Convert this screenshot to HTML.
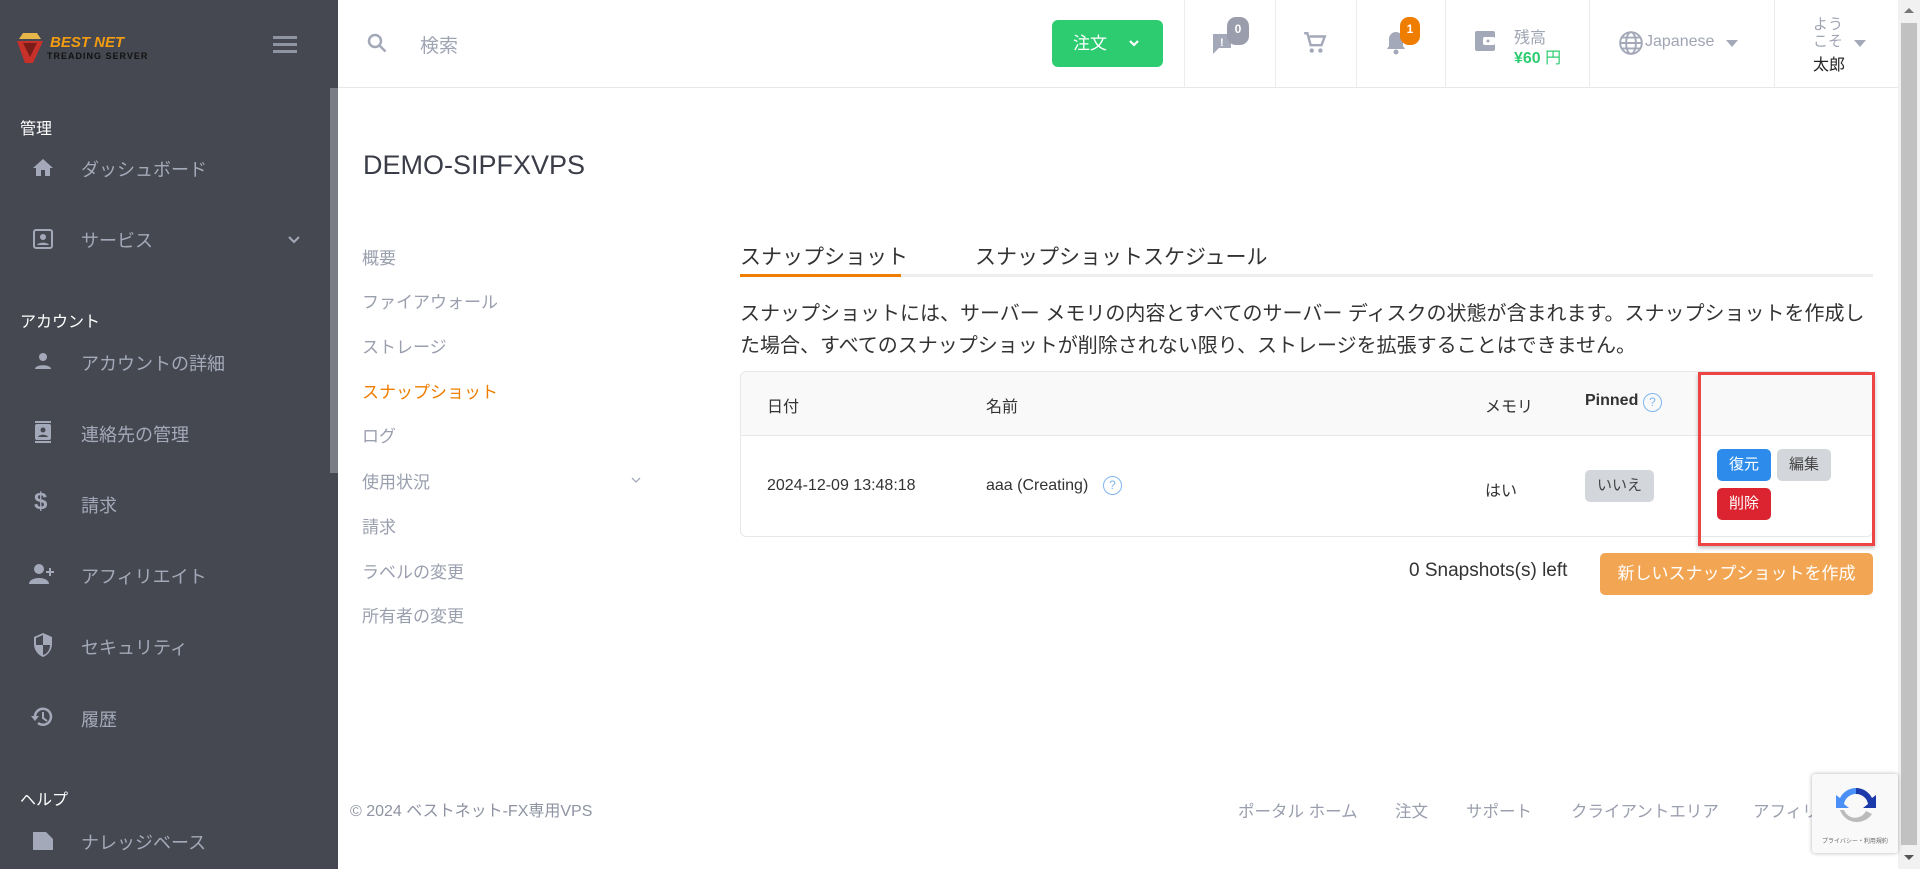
<!DOCTYPE html>
<html><head><meta charset="utf-8"><style>
*{box-sizing:border-box;margin:0;padding:0}
body{width:1920px;height:869px;overflow:hidden;background:#fff;font-family:"Liberation Sans","Noto Sans CJK JP",sans-serif;position:relative}
.a{position:absolute;white-space:nowrap}
#sb{position:absolute;left:0;top:0;width:338px;height:869px;background:#464851}
.sl{color:#fff;font-size:16px}
.si{color:#a4a9b9;font-size:18px}
.ic{position:absolute}
.hd{position:absolute;top:0;height:88px;border-left:1px solid #ececec}
.m{color:#9a9fae;font-size:17px}
.th{font-size:16px;color:#333}
.btn{position:absolute;border-radius:5px;font-size:14px;text-align:center;color:#fff}
</style></head><body>
<div id="sb">
 <svg class="ic" style="left:15px;top:33px" width="40" height="30" viewBox="0 0 40 30"><polygon points="8,0 22,0 26,6 4,6" fill="#e6b64a"/><polygon points="2,8 28,8 18,30 10,30" fill="#c8302a"/><polygon points="8,10 22,10 15,24" fill="#7a1c18"/></svg>
 <div class="a" style="left:50px;top:34px;color:#f39c12;font:italic bold 15px 'Liberation Sans',sans-serif">BEST NET</div>
 <div class="a" style="left:47px;top:51px;color:#111;font:bold 9px 'Liberation Sans',sans-serif;letter-spacing:1px">TREADING SERVER</div>
 <div class="a" style="left:273px;top:36px;width:24px;height:3px;background:#8f94a3;box-shadow:0 7px 0 #8f94a3,0 14px 0 #8f94a3"></div>
 <div class="a" style="left:330px;top:88px;width:8px;height:385px;background:#7b7d86"></div>
 <div class="a sl" style="left:20px;top:115px">管理</div>
 <svg class="ic" style="left:31px;top:156px" width="24" height="24" viewBox="0 0 24 24"><path d="M10 20v-6h4v6h5v-8h3L12 3 2 12h3v8z" fill="#a4a9b9"/></svg>
 <div class="a si" style="left:81px;top:156px">ダッシュボード</div>
 <svg class="ic" style="left:31px;top:227px" width="24" height="24" viewBox="0 0 24 24"><rect x="3" y="3" width="18" height="18" rx="2" fill="none" stroke="#a4a9b9" stroke-width="2"/><circle cx="12" cy="10" r="3" fill="#a4a9b9"/><path d="M6 18c1-3 11-3 12 0z" fill="#a4a9b9"/></svg>
 <div class="a si" style="left:81px;top:227px">サービス</div>
 <svg class="ic" style="left:286px;top:232px" width="16" height="16" viewBox="0 0 16 16"><path d="M3 5l5 5 5-5" stroke="#a4a9b9" stroke-width="2" fill="none"/></svg>
 <div class="a sl" style="left:20px;top:308px">アカウント</div>
 <svg class="ic" style="left:31px;top:349px" width="24" height="24" viewBox="0 0 24 24"><circle cx="12" cy="8" r="4" fill="#a4a9b9"/><path d="M4 20c0-5 16-5 16 0z" fill="#a4a9b9"/></svg>
 <div class="a si" style="left:81px;top:350px">アカウントの詳細</div>
 <svg class="ic" style="left:31px;top:420px" width="24" height="24" viewBox="0 0 24 24"><rect x="4" y="4" width="16" height="16" rx="2" fill="#a4a9b9"/><rect x="4" y="1" width="16" height="2" fill="#a4a9b9"/><rect x="4" y="21" width="16" height="2" fill="#a4a9b9"/><circle cx="12" cy="10" r="2.5" fill="#464851"/><path d="M7 17c1-3 9-3 10 0z" fill="#464851"/></svg>
 <div class="a si" style="left:81px;top:421px">連絡先の管理</div>
 <div class="a" style="left:34px;top:488px;color:#a4a9b9;font-size:24px;font-weight:bold">$</div>
 <div class="a si" style="left:81px;top:492px">請求</div>
 <svg class="ic" style="left:28px;top:562px" width="30" height="24" viewBox="0 0 30 24"><circle cx="11" cy="7" r="5" fill="#a4a9b9"/><path d="M1 22c0-8 20-8 20 0z" fill="#a4a9b9"/><path d="M22 6v8M18 10h8" stroke="#a4a9b9" stroke-width="2"/></svg>
 <div class="a si" style="left:81px;top:563px">アフィリエイト</div>
 <svg class="ic" style="left:31px;top:632px" width="24" height="26" viewBox="0 0 24 26"><path d="M12 1L3 5v7c0 6 4 11 9 13 5-2 9-7 9-13V5z" fill="#a4a9b9"/><path d="M12 3v10H5V6zM12 13h7c0 5-3 9-7 10z" fill="#464851"/></svg>
 <div class="a si" style="left:81px;top:634px">セキュリティ</div>
 <svg class="ic" style="left:29px;top:704px" width="26" height="26" viewBox="0 0 26 26"><path d="M6 13a8 8 0 1 1 3 6" stroke="#a4a9b9" stroke-width="2.5" fill="none"/><path d="M2 12h8l-4 5z" fill="#a4a9b9"/><path d="M14 8v6l4 3" stroke="#a4a9b9" stroke-width="2" fill="none"/></svg>
 <div class="a si" style="left:81px;top:706px">履歴</div>
 <div class="a sl" style="left:20px;top:786px">ヘルプ</div>
 <svg class="ic" style="left:31px;top:829px" width="24" height="24" viewBox="0 0 24 24"><path d="M2 3h13l7 7v11H2z" fill="#a4a9b9"/></svg>
 <div class="a si" style="left:81px;top:829px">ナレッジベース</div>
</div>
<!-- header -->
<div class="a" style="left:338px;top:87px;width:1560px;height:1px;background:#e8e8e8"></div>
<svg class="ic" style="left:365px;top:31px" width="24" height="24" viewBox="0 0 24 24"><circle cx="10" cy="10" r="6" stroke="#a4a9b9" stroke-width="2.5" fill="none"/><path d="M14.5 14.5l6 6" stroke="#a4a9b9" stroke-width="2.5"/></svg>
<div class="a" style="left:420px;top:31px;font-size:19px;color:#a0a5b4">検索</div>
<div class="btn" style="left:1052px;top:20px;width:111px;height:47px;background:#2ecc71;font-size:17px;line-height:47px;border-radius:6px;text-align:left;padding-left:21px">注文<svg style="position:absolute;left:76px;top:19px" width="12" height="10" viewBox="0 0 12 10"><path d="M2 2l4 4 4-4" stroke="#fff" stroke-width="2.2" fill="none"/></svg></div>
<div class="hd" style="left:1184px"></div><div class="hd" style="left:1275px"></div><div class="hd" style="left:1356px"></div><div class="hd" style="left:1445px"></div><div class="hd" style="left:1589px"></div><div class="hd" style="left:1774px"></div>
<svg class="ic" style="left:1211px;top:30px" width="24" height="26" viewBox="0 0 24 26"><path d="M2 4h18v14H8l-6 6z" fill="#a4a9b9"/><text x="9" y="16" font-size="11" fill="#fff" font-family="Liberation Sans" font-weight="bold">!</text></svg>
<div class="a" style="left:1227px;top:17px;width:22px;height:28px;border-radius:9px;background:#9a9dab;color:#fff;font-size:12px;font-weight:bold;text-align:center;line-height:24px">0</div>
<svg class="ic" style="left:1302px;top:30px" width="26" height="26" viewBox="0 0 24 24"><path d="M2 3h3l3 11h10l3-8H7" stroke="#a4a9b9" stroke-width="2.2" fill="none"/><circle cx="9" cy="19" r="2" fill="#a4a9b9"/><circle cx="17" cy="19" r="2" fill="#a4a9b9"/></svg>
<svg class="ic" style="left:1384px;top:30px" width="24" height="26" viewBox="0 0 24 26"><path d="M12 2a7 7 0 0 0-7 7v7l-2 3h18l-2-3V9a7 7 0 0 0-7-7z" fill="#a4a9b9"/><circle cx="12" cy="22" r="2.5" fill="#a4a9b9"/></svg>
<div class="a" style="left:1400px;top:17px;width:20px;height:28px;border-radius:9px;background:#ef7d00;color:#fff;font-size:12px;font-weight:bold;text-align:center;line-height:24px">1</div>
<svg class="ic" style="left:1474px;top:29px" width="22" height="24" viewBox="0 0 22 24"><rect x="1" y="2" width="20" height="20" rx="2" fill="#a4a9b9"/><rect x="9" y="8" width="12" height="8" rx="2" fill="#fff"/><circle cx="14" cy="12" r="1.5" fill="#a4a9b9"/></svg>
<div class="a" style="left:1514px;top:24px;font-size:16px;color:#a0a5b4">残高</div>
<div class="a" style="left:1514px;top:44px;font-size:16px;color:#2ecc71;font-weight:bold">¥60 <span style="font-weight:normal">円</span></div>
<svg class="ic" style="left:1618px;top:30px" width="26" height="26" viewBox="0 0 24 24" fill="none" stroke="#a4a9b9" stroke-width="1.8"><circle cx="12" cy="12" r="10"/><ellipse cx="12" cy="12" rx="4.5" ry="10"/><path d="M2 12h20M4 7h16M4 17h16"/></svg>
<div class="a" style="left:1645px;top:33px;font-size:16px;color:#a0a5b4">Japanese</div>
<div class="a" style="left:1726px;top:40px;border:6px solid transparent;border-top:7px solid #a4a9b9"></div>
<div class="a" style="left:1813px;top:16px;font-size:15px;color:#a0a5b4;line-height:17px">よう<br>こそ</div>
<div class="a" style="left:1854px;top:40px;border:6px solid transparent;border-top:7px solid #a4a9b9"></div>
<div class="a" style="left:1813px;top:51px;font-size:16px;color:#222">太郎</div>
<!-- scrollbar -->
<div class="a" style="left:1898px;top:0;width:22px;height:869px;background:#f1f1f1"></div>
<div class="a" style="left:1901px;top:23px;width:16px;height:822px;background:#c1c1c1"></div>
<div class="a" style="left:1904px;top:8px;border:5px solid transparent;border-bottom:5px solid #777;border-top:0"></div>
<div class="a" style="left:1904px;top:855px;border:5px solid transparent;border-top:5px solid #555;border-bottom:0"></div>
<!-- content -->
<div class="a" style="left:363px;top:150px;font-size:27px;color:#3a3d48">DEMO-SIPFXVPS</div>
<div class="a m" style="left:362px;top:244px">概要</div>
<div class="a m" style="left:362px;top:288px">ファイアウォール</div>
<div class="a m" style="left:362px;top:333px">ストレージ</div>
<div class="a m" style="left:362px;top:378px;color:#ef7d00">スナップショット</div>
<div class="a m" style="left:362px;top:422px">ログ</div>
<div class="a m" style="left:362px;top:468px">使用状況</div>
<svg class="ic" style="left:630px;top:475px" width="12" height="10" viewBox="0 0 12 10"><path d="M2 3l4 4 4-4" stroke="#a4a9b9" stroke-width="1.3" fill="none"/></svg>
<div class="a m" style="left:362px;top:513px">請求</div>
<div class="a m" style="left:362px;top:558px">ラベルの変更</div>
<div class="a m" style="left:362px;top:602px">所有者の変更</div>
<div class="a" style="left:740px;top:241px;font-size:21px;color:#333">スナップショット</div>
<div class="a" style="left:975px;top:241px;font-size:21px;color:#333">スナップショットスケジュール</div>
<div class="a" style="left:740px;top:274px;width:1133px;height:3px;background:#eee"></div>
<div class="a" style="left:740px;top:274px;width:161px;height:3px;background:#ef7d00"></div>
<div class="a" style="left:740px;top:298px;width:1133px;font-size:20px;line-height:32px;color:#333;white-space:normal;word-break:break-all">スナップショットには、サーバー メモリの内容とすべてのサーバー ディスクの状態が含まれます。スナップショットを作成した場合、すべてのスナップショットが削除されない限り、ストレージを拡張することはできません。</div>
<div class="a" style="left:740px;top:371px;width:1133px;height:166px;border:1px solid #e8e8e8;border-radius:6px;overflow:hidden">
 <div style="height:64px;background:#f9f9f9;border-bottom:1px solid #e8e8e8"></div>
</div>
<div class="a th" style="left:767px;top:393px">日付</div>
<div class="a th" style="left:986px;top:393px">名前</div>
<div class="a th" style="left:1485px;top:393px">メモリ</div>
<div class="a th" style="left:1585px;top:392px;font-weight:bold">Pinned</div>
<div class="a" style="left:1643px;top:393px;width:19px;height:19px;border:1.5px solid #7fb6ee;border-radius:50%;color:#7fb6ee;font-size:12px;text-align:center;line-height:16px">?</div>
<div class="a th" style="left:767px;top:477px">2024-12-09 13:48:18</div>
<div class="a th" style="left:986px;top:477px">aaa (Creating)</div>
<div class="a" style="left:1103px;top:476px;width:19px;height:19px;border:1.5px solid #7fb6ee;border-radius:50%;color:#7fb6ee;font-size:12px;text-align:center;line-height:16px">?</div>
<div class="a th" style="left:1485px;top:477px">はい</div>
<div class="btn" style="left:1585px;top:470px;width:69px;height:32px;background:#d3d6db;color:#444;font-size:15px;line-height:32px">いいえ</div>
<div class="btn" style="left:1717px;top:449px;width:54px;height:32px;background:#2d8ceb;line-height:32px;font-size:15px">復元</div>
<div class="btn" style="left:1777px;top:449px;width:54px;height:32px;background:#d3d6db;color:#444;line-height:32px;font-size:15px">編集</div>
<div class="btn" style="left:1717px;top:488px;width:54px;height:32px;background:#dc2430;line-height:32px;font-size:15px">削除</div>
<div class="a" style="left:1698px;top:372px;width:177px;height:174px;border:3px solid #ef4444;box-shadow:0 2px 4px rgba(0,0,0,.25)"></div>
<div class="a" style="left:1409px;top:560px;font-size:19px;color:#333">0 Snapshots(s) left</div>
<div class="btn" style="left:1600px;top:553px;width:273px;height:42px;background:#f2a654;line-height:42px;font-size:17px">新しいスナップショットを作成</div>
<!-- footer -->
<div class="a" style="left:350px;top:797px;font-size:16px;color:#8e93a2">© 2024 ベストネット-FX専用VPS</div>
<div class="a" style="left:1238px;top:798px;font-size:16.5px;color:#9a9fae">ポータル ホーム</div>
<div class="a" style="left:1395px;top:798px;font-size:16.5px;color:#9a9fae">注文</div>
<div class="a" style="left:1466px;top:798px;font-size:16.5px;color:#9a9fae">サポート</div>
<div class="a" style="left:1571px;top:798px;font-size:16.5px;color:#9a9fae">クライアントエリア</div>
<div class="a" style="left:1753px;top:798px;font-size:16.5px;color:#9a9fae">アフィリエイト</div>
<div class="a" style="left:1812px;top:774px;width:86px;height:79px;background:#f9f9f9;box-shadow:0 0 4px rgba(0,0,0,.3);border-radius:3px"></div>
<svg class="ic" style="left:1834px;top:784px" width="44" height="44" viewBox="0 0 44 44"><path d="M22 4a18 18 0 0 1 16 10l4-3v13H29l5-4A12 12 0 0 0 22 10z" fill="#1c3aa9"/><path d="M22 4A18 18 0 0 0 6 14l-4-3v13h13l-5-4a12 12 0 0 1 12-10z" fill="#4a90f7"/><path d="M6 26a18 18 0 0 0 32 4l-6-3a12 12 0 0 1-22-1z" fill="#bbb"/></svg>
<div class="a" style="left:1822px;top:836px;font-size:6px;color:#666">プライバシー・利用規約</div>
</body></html>
